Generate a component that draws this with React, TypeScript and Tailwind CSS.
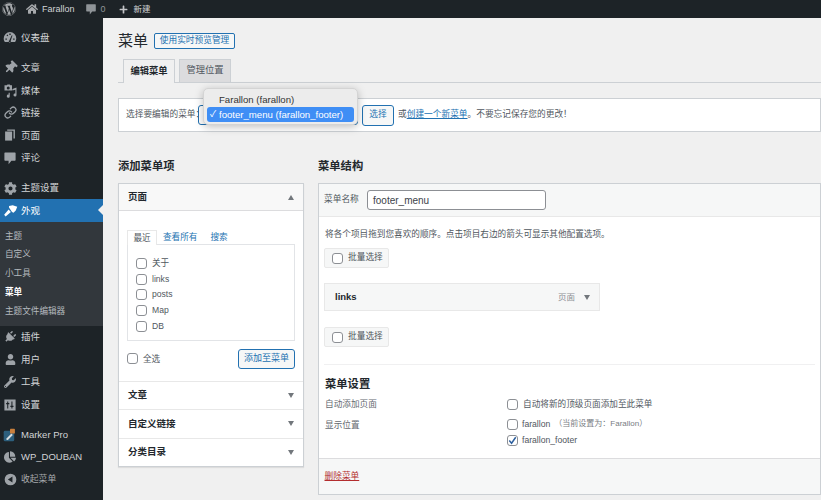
import React from "react";
import { FaWordpress, FaHome, FaThumbtack, FaCog, FaPlug, FaUser, FaWrench, FaChartPie, FaPlus } from "react-icons/fa";
import { Link as LinkIcon } from "lucide-react";

const font = "font-['Liberation_Sans','Noto_Sans_CJK_SC',sans-serif]";

const Svg = ({ children, c = "" }: { children: React.ReactNode; c?: string }) => (
  <svg viewBox="0 0 20 20" className={c} fill="currentColor">{children}</svg>
);
const Gauge = () => (
  <Svg c="w-[14px] h-[14px]"><path fillRule="evenodd" d="M10 3a9 9 0 0 0-9 9c0 2 .7 3.700 1.700 5h14.600A8.900 8.900 0 0 0 19 12a9 9 0 0 0-9-9zM9 5h2v2H9zM5 7.500l1.500-1 1 1.500-1.500 1zM3.500 12h2v2h-2zm11 0h2v2h-2zM9 15l3.500-7.500 1 .5L11 15.500a1.500 1.500 0 1 1-2-.5z" /></Svg>
);
const Media = () => (
  <Svg c="w-[15px] h-[15px]"><path fillRule="evenodd" d="M2 3h3l1-1h3l1 1h2v7H2zm5 1.500a2 2 0 1 0 0 4 2 2 0 0 0 0-4zM18 6v10a2 2 0 1 1-1.500-1.900V9l-4 1V8zM9 13v4.500a2 2 0 1 1-1.500-1.900V13z" /></Svg>
);
const Page = () => (
  <Svg c="w-[14px] h-[14px]"><path d="M6 2h11v13h-2V4H6z" /><path d="M3 5h10v13H3z" /></Svg>
);
const Comment = ({ c = "w-[14px] h-[14px]" }: { c?: string }) => (
  <Svg c={c}><path d="M3 2h14a1 1 0 0 1 1 1v10a1 1 0 0 1-1 1h-5l-4 5v-5H3a1 1 0 0 1-1-1V3a1 1 0 0 1 1-1z" /></Svg>
);
const Sliders = () => (
  <Svg c="w-[14px] h-[14px]"><path fillRule="evenodd" d="M2 2h16v16H2zm4 3v2H4.500v2H6v6h1.500V9H9V7H7.500V5zm6 0v6h-1.500v2H12v2h1.500v-2H15v-2h-1.500V5z" /></Svg>
);
const Collapse = () => (
  <Svg c="w-[13px] h-[13px]"><path fillRule="evenodd" d="M10 1a9 9 0 1 1 0 18 9 9 0 0 1 0-18zm3 4.500L6 10l7 4.500z" /></Svg>
);
const Appearance = () => (
  <Svg c="w-[15px] h-[15px]"><path d="M8 4l5-1 6 2-2 5-3 3-2-1-2-3-2-3zM7.500 8.500l3 3.500-7 6-2-2.500z" /></Svg>
);
const Marker = () => (
  <svg viewBox="0 0 20 20" className="w-[14px] h-[14px]">
    <rect x="1" y="4" width="15" height="15" rx="2" fill="#2d5f7d" />
    <path d="M5 15l7-7 2 2-7 7H5z" fill="#d8dde0" />
    <rect x="10" y="1" width="7" height="7" rx="1" fill="#c97f3c" />
  </svg>
);

const Item = ({ icon, label, active }: { icon: React.ReactNode; label: string; active?: boolean }) => (
  <div className={`relative flex items-center h-[22.600px] ${active ? "bg-[#2271b1] text-white" : "text-[#d2d4d6]"}`}>
    <span className={`flex justify-center w-[20px] mr-[1px] ${active ? "text-white" : "text-[#9ea3a8]"}`}>{icon}</span>
    <span className="text-[9.500px] leading-none whitespace-nowrap">{label}</span>
    {active && <span className="absolute right-0 top-[6px] border-y-[5px] border-r-[5px] border-y-transparent border-r-[#f0f0f0]" />}
  </div>
);
const Sub = ({ label, active }: { label: string; active?: boolean }) => (
  <div className={`flex items-center h-[18.800px] pl-[5px] text-[8.600px] leading-none ${active ? "text-white font-bold" : "text-[#b4b9be]"}`}>{label}</div>
);

const Sidebar = () => (
  <aside className="w-[103px] shrink-0 bg-[#1d2327] flex flex-col pt-[8px]">
    <Item icon={<Gauge />} label="仪表盘" />
    <div className="mt-[7.800px]">
      <Item icon={<FaThumbtack className="w-[13px] h-[13px] rotate-45" />} label="文章" />
      <Item icon={<Media />} label="媒体" />
      <Item icon={<LinkIcon className="w-[13px] h-[13px]" strokeWidth={2.4} />} label="链接" />
      <Item icon={<Page />} label="页面" />
      <Item icon={<Comment />} label="评论" />
    </div>
    <div className="mt-[7.400px]">
      <Item icon={<FaCog className="w-[13px] h-[13px]" />} label="主题设置" />
    </div>
    <Item active icon={<Appearance />} label="外观" />
    <div className="bg-[#32373c] pt-[4.600px] pb-[5px]">
      <Sub label="主题" />
      <Sub label="自定义" />
      <Sub label="小工具" />
      <Sub label="菜单" active />
      <Sub label="主题文件编辑器" />
    </div>
    <Item icon={<FaPlug className="w-[12px] h-[12px] rotate-45" />} label="插件" />
    <Item icon={<FaUser className="w-[11px] h-[11px]" />} label="用户" />
    <Item icon={<FaWrench className="w-[12px] h-[12px]" />} label="工具" />
    <Item icon={<Sliders />} label="设置" />
    <div className="mt-[7.400px]">
      <Item icon={<Marker />} label="Marker Pro" />
      <Item icon={<FaChartPie className="w-[12px] h-[12px]" />} label="WP_DOUBAN" />
      <div className="flex items-center h-[22.600px] text-[#a7aaad]">
        <span className="flex justify-center w-[20px] mr-[1px] text-[#9ea3a8]"><Collapse /></span>
        <span className="text-[8.800px] leading-none">收起菜单</span>
      </div>
    </div>
  </aside>
);

const TopBar = () => (
  <header className="h-[18px] shrink-0 bg-[#1d2327] flex items-center text-[#d2d4d6] text-[9px] leading-none">
    <FaWordpress className="w-[14px] h-[14px] ml-[2px] text-[#a7aaad]" />
    <FaHome className="w-[12px] h-[12px] ml-[10px] text-[#a7aaad]" />
    <span className="ml-[4px]">Farallon</span>
    <Comment c="w-[12px] h-[12px] ml-[10px] text-[#8f9498]" />
    <span className="ml-[4px] text-[#8f9498]">0</span>
    <FaPlus className="w-[9px] h-[9px] ml-[13px] text-[#c3c4c7]" />
    <span className="ml-[6px] text-[8.500px]">新建</span>
  </header>
);

const Check = ({ checked, className = "" }: { checked?: boolean; className?: string }) => (
  <span className={`relative inline-block w-[11px] h-[11px] shrink-0 rounded-[3px] border border-[#8c8f94] bg-white ${className}`}>
    {checked && (
      <svg viewBox="0 0 12 12" className="absolute -left-[1px] -top-[1px] w-[11px] h-[11px]" fill="none" stroke="#2c5f9e" strokeWidth="1.600"><path d="M2.500 6l2.500 3 4.500-6.500" /></svg>
    )}
  </span>
);

const Tri = ({ up }: { up?: boolean }) => (
  <span className={`w-0 h-0 border-x-[3.500px] border-x-transparent ${up ? "border-b-[5px] border-b-[#72777c]" : "border-t-[5px] border-t-[#72777c]"}`} />
);

const Section = ({ label, h }: { label: string; h: string }) => (
  <div className={`flex items-center justify-between pl-[9px] pr-[9px] border-t border-[#e8e8e8] text-[#23282d] text-[9.500px] font-bold ${h}`}>
    <span>{label}</span><Tri />
  </div>
);

const PageRow = ({ label }: { label: string }) => (
  <div className="flex items-center h-[15.700px] text-[8.600px] text-[#50575e]"><Check className="mr-[5px]" />{label}</div>
);

const Left = () => (
  <div className="w-[186px] shrink-0">
    <h2 className="h-[17px] flex items-center text-[11.300px] font-bold text-[#23282d] leading-none">添加菜单项</h2>
    <div className="mt-[8px] bg-white border border-[#ccd0d4] shadow-[0_1px_1px_rgba(0,0,0,0.08)]">
      <div className="h-[27px] flex items-center justify-between pl-[9px] pr-[9px] bg-[#f8f8f8] border-b border-[#dcdcde] text-[9.500px] font-bold text-[#23282d]">
        <span>页面</span><Tri up />
      </div>
      <div className="px-[8px] pt-[20px] pb-[12px] h-[170px]">
        <div className="flex items-end h-[13px] text-[8.600px] leading-none">
          <span className="h-[15px] w-[30px] flex items-center justify-center text-[#50575e] bg-white border border-b-0 border-[#e8e8e8] relative top-[1px]">最近</span>
          <span className="ml-[6px] h-[13px] flex items-center text-[#2271b1]">查看所有</span>
          <span className="ml-[13px] h-[13px] flex items-center text-[#2271b1]">搜索</span>
        </div>
        <div className="h-[97px] border border-[#e2e4e7] pl-[8px] pt-[10.500px]">
          <PageRow label="关于" />
          <PageRow label="links" />
          <PageRow label="posts" />
          <PageRow label="Map" />
          <PageRow label="DB" />
        </div>
        <div className="flex items-center justify-between mt-[8px]">
          <span className="flex items-center text-[8.600px] text-[#50575e]"><Check className="mr-[5px]" />全选</span>
          <span className="h-[20px] w-[57px] flex items-center justify-center rounded-[3px] border border-[#2271b1] bg-[#f6f7f7] text-[9px] text-[#2271b1]">添加至菜单</span>
        </div>
      </div>
      <Section label="文章" h="h-[28px]" />
      <Section label="自定义链接" h="h-[28.500px]" />
      <Section label="分类目录" h="h-[28.500px]" />
    </div>
  </div>
);

const Bulk = () => (
  <div className="w-[65px] h-[20px] flex items-center pl-[7px] rounded-[2px] bg-[#f6f7f7] border border-[#e8e8e8] text-[8.700px] text-[#50575e]">
    <Check className="mr-[5px]" />批量选择
  </div>
);

const Right = () => (
  <div className="flex-1 min-w-0">
    <h2 className="h-[17px] flex items-center text-[11.300px] font-bold text-[#23282d] leading-none">菜单结构</h2>
    <div className="mt-[8px] mr-[-15px] bg-white border border-[#ccd0d4] h-[312px] flex flex-col">
      <div className="h-[33px] shrink-0 flex items-center pl-[5px] bg-[#f6f7f7] border-b border-[#e8e8e8] text-[8.700px] text-[#50575e]">
        <span className="w-[43px]">菜单名称</span>
        <span className="w-[179px] h-[20px] flex items-center pl-[5px] bg-white border border-[#8c8f94] rounded-[3px] text-[10px] text-[#3c434a]">footer_menu</span>
      </div>
      <div className="flex-1 px-[5px] pt-[11px]">
        <p className="h-[12px] pl-[1px] flex items-center text-[8.650px] text-[#50575e] leading-none whitespace-nowrap">将各个项目拖到您喜欢的顺序。点击项目右边的箭头可显示其他配置选项。</p>
        <div className="mt-[8px]"><Bulk /></div>
        <div className="mt-[15px] w-[276px] h-[28px] flex items-center pl-[10px] pr-[9px] bg-[#f6f7f7] border border-[#e8e8e8] text-[9.500px]">
          <span className="font-bold text-[#23282d]">links</span>
          <span className="ml-auto text-[#8c8f94] text-[8.500px]">页面</span>
          <span className="ml-[9px] flex"><Tri /></span>
        </div>
        <div className="mt-[16px]"><Bulk /></div>
        <div className="mt-[17px] border-t border-[#f0f0f1]" />
        <h3 className="mt-[13px] pl-[1px] h-[14px] flex items-center text-[11.300px] font-bold text-[#23282d] leading-none">菜单设置</h3>
        <div className="mt-[5px] pl-[1px] flex items-center h-[14px] text-[8.650px] text-[#646970]">
          <span className="w-[182px]">自动添加页面</span>
          <Check className="mr-[5px]" /><span className="text-[#50575e]">自动将新的顶级页面添加至此菜单</span>
        </div>
        <div className="mt-[5px] pl-[1px] flex text-[8.650px] text-[#646970]">
          <span className="w-[182px] h-[15px] mt-[2px] flex items-center">显示位置</span>
          <div className="text-[#50575e]">
            <div className="h-[16px] flex items-center"><Check className="mr-[4px]" />farallon<span className="ml-[4px] text-[#787c82] text-[8px]">（当前设置为：Farallon）</span></div>
            <div className="h-[16px] flex items-center"><Check checked className="mr-[4px]" />farallon_footer</div>
          </div>
        </div>
      </div>
      <div className="h-[36px] shrink-0 flex items-center pl-[5.500px] bg-[#f6f7f7] border-t border-[#dcdcde] text-[8.700px] text-[#b32d2e] underline">删除菜单</div>
    </div>
  </div>
);

const Manage = () => (
  <div className="mt-[15px] h-[34px] mr-[-15px] flex items-center relative bg-white border border-[#ccd0d4] pl-[7px] text-[8.700px] text-[#50575e] whitespace-nowrap">
    <span className="w-[72px]">选择要编辑的菜单：</span>
    <span className="w-[160px] h-[20px] rounded-[3px] border border-[#2271b1]" />
    <span className="ml-[4px] h-[21px] w-[32px] flex items-center justify-center rounded-[3px] border border-[#2271b1] bg-[#f6f7f7] text-[#2271b1]">选择</span>
    <span className="ml-[4px]">或<span className="text-[#2271b1] underline">创建一个新菜单</span>。不要忘记保存您的更改！</span>
    <div className="absolute left-[84px] -top-[11px] w-[155px] h-[37px] rounded-[5px] bg-[#ececec] border border-[#d4d4d4] shadow-[0_2px_8px_rgba(0,0,0,0.25)] p-[3px] pt-[4px] text-[9.600px] text-[#333] leading-none">
      <div className="h-[14px] flex items-center pl-[12px]">Farallon (farallon)</div>
      <div className="h-[15px] flex items-center bg-[#3f8ef5] rounded-[3px] text-white pl-[3px]"><span className="w-[9px] text-[9px]">✓</span>footer_menu (farallon_footer)</div>
    </div>
  </div>
);

export default function App() {
  return (
    <div className={`w-[821px] h-[500px] overflow-hidden flex flex-col bg-[#f0f0f0] ${font}`}>
      <TopBar />
      <div className="flex flex-1 min-h-0">
        <Sidebar />
        <main className="flex-1 min-w-0 pl-[15px] pr-[15px] pt-[14px]">
          <div className="flex items-center h-[17px]">
            <h1 className="text-[15px] leading-none text-[#23282d]">菜单</h1>
            <span className="ml-[6px] w-[81px] h-[16px] flex items-center justify-center rounded-[2px] border border-[#2271b1] bg-[#f6f7f7] text-[8.700px] text-[#2271b1] leading-none">使用实时预览管理</span>
          </div>
          <div className="mt-[10px] mr-[-15px] pl-[5px] h-[24px] flex items-end border-b border-[#ccd0d4] text-[9.300px] font-bold leading-none">
            <span className="w-[52px] h-[24px] flex items-center justify-center bg-[#f0f0f0] border border-b-0 border-[#ccd0d4] text-[#23282d] relative top-[1px]">编辑菜单</span>
            <span className="ml-[4px] w-[52px] h-[23px] flex items-center justify-center bg-[#dcdcde] border border-b-0 border-[#ccd0d4] text-[#50575e] font-normal">管理位置</span>
          </div>
          <Manage />
          <div className="mt-[26px] flex gap-[14px]">
            <Left />
            <Right />
          </div>
        </main>
      </div>
    </div>
  );
}
